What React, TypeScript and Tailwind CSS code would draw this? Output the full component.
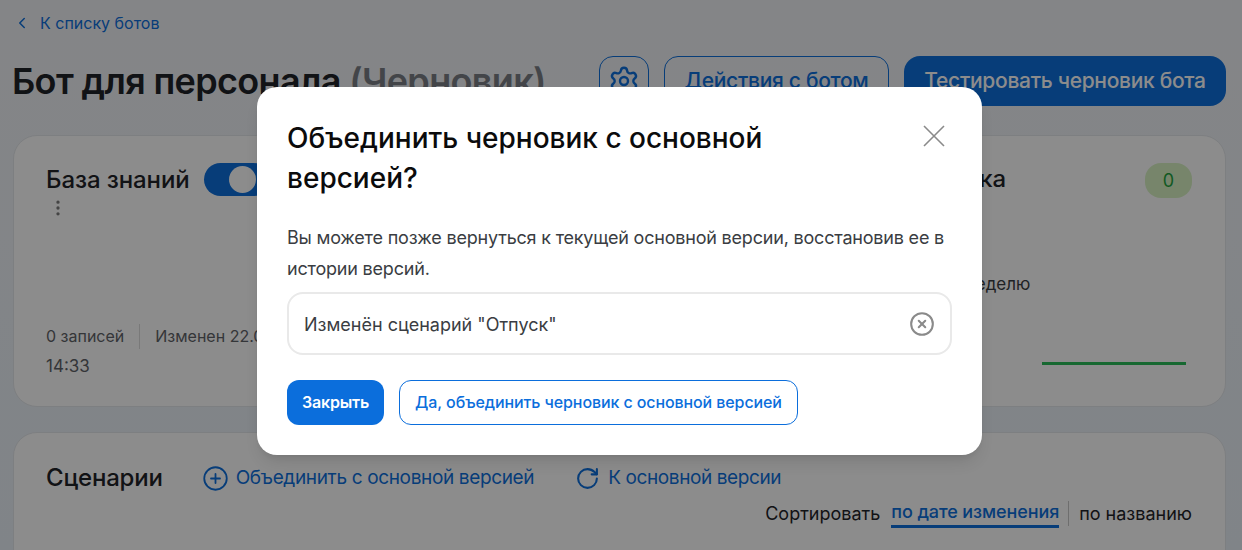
import React from 'react';
import { ChevronLeft, Settings, CircleX, CirclePlus, RotateCw, EllipsisVertical } from 'lucide-react';

function KnowledgeCard() {
  return (
    <div className="flex-1 min-w-0 pl-[32px] pt-[27px] pb-[24px] flex flex-col justify-between">
      <div>
        <div className="flex items-center gap-[14px]">
          <span className="text-[24px] leading-[32px] font-medium tracking-[-0.1px] text-[#1f2328]">База знаний</span>
          <div className="w-[66px] h-[33px] rounded-full bg-[#0d6fdd] flex items-center justify-end pr-[14px]">
            <div className="w-[27px] h-[27px] rounded-full bg-white" />
          </div>
        </div>
        <EllipsisVertical className="ml-[2px] mt-[2px] text-[#7d7d7d]" size={20} strokeWidth={2} />
      </div>
      <div className="text-[16px] leading-[32px] text-[#5f6368]">
        <div className="flex items-center">
          <span>0 записей</span>
          <span className="mx-[15px] w-px h-[25px] bg-[#dcdcdc]" />
          <span>Изменен 22.02.2024</span>
        </div>
        <div className="-mt-[2px] text-[17px]">14:33</div>
      </div>
    </div>
  );
}

function StatsCard() {
  return (
    <div className="w-[290px] pr-[33px] pt-[27px] pb-[41px] flex flex-col items-end relative">
      <div className="w-full flex items-start justify-between pl-[12px]">
        <span className="text-[24px] leading-[32px] font-medium tracking-[-0.1px] text-[#1f2328] -ml-[76px]">Статистика</span>
        <span className="w-[47px] h-[35px] rounded-[16px] bg-[#d9f3c4] text-[#1fa33f] text-[18px] flex items-center justify-center">0</span>
      </div>
      <div className="w-full pl-[8px] mt-[74px] text-[17px] leading-[24px] text-[#3a3d42] text-left">за неделю</div>
      <div className="mt-auto mr-[6px] w-[144px] h-[3px] bg-[#2bbd5a]" />
    </div>
  );
}

function Dialog() {
  return (
    <div className="absolute inset-0 z-10 bg-black/45">
      <div className="ml-[257px] mt-[87px] w-[725px] h-[368px] bg-white rounded-[20px] pl-[30px] pr-[30px] pt-[31px] shadow-lg">
        <div className="flex justify-between items-start">
          <h2 className="w-[520px] text-[28px] leading-[40px] font-medium text-[#0b0b0c]">Объединить черновик с основной версией?</h2>
          <button className="mr-[7px] mt-[7px] text-[#8a8a8a]">
            <svg width="22" height="22" viewBox="0 0 22 22" fill="none" stroke="currentColor" strokeWidth="1.6">
              <path d="M1 1L21 21M21 1L1 21" />
            </svg>
          </button>
        </div>
        <p className="mt-[24px] text-[18px] leading-[31px] tracking-[-0.2px] text-[#3a3d42]">Вы можете позже вернуться к текущей основной версии, восстановив ее в истории версий.</p>
        <div className="mt-[8px] h-[63px] rounded-[16px] border-2 border-[#e9e9e9] flex items-center justify-between pl-[15px] pr-[15px]">
          <span className="text-[18px] leading-[28px] mt-[3px] text-[#3a3d42]">Изменён сценарий "Отпуск"</span>
          <CircleX className="text-[#8a8a8a]" size={26} strokeWidth={1.9} />
        </div>
        <div className="mt-[25px] flex gap-[15px]">
          <button className="h-[45px] w-[97px] rounded-[12px] bg-[#0b6edc] text-white text-[16px] font-semibold tracking-[-0.2px] pb-[2px]">Закрыть</button>
          <button className="h-[45px] w-[399px] rounded-[12px] border border-[#0b6edc] text-[#0b6edc] text-[16px] font-medium tracking-[-0.1px] pb-[2px]">Да, объединить черновик с основной версией</button>
        </div>
      </div>
    </div>
  );
}

export default function App() {
  return (
    <div className="relative h-[550px] w-[1242px] overflow-hidden bg-gradient-to-b from-[#f1f3f6] to-[#eaf1f8] font-['Inter','Noto_Sans',sans-serif]">
      <div className="pl-[13px] pr-[16px]">
        <div className="h-[56px] flex items-center text-[#0d6fdd] text-[16px] -mt-[5px]">
          <ChevronLeft size={18} strokeWidth={2} />
          <span className="ml-[9px]">К списку ботов</span>
        </div>
        <div className="flex items-center h-[50px] mt-[5px]">
          <h1 className="text-[36px] font-semibold tracking-[-0.65px] -ml-[1px] text-[#1f2328] whitespace-nowrap">Бот для персонала <span className="text-[#7b7f85]">(Черновик)</span></h1>
          <div className="ml-auto flex">
            <button className="w-[50px] h-[50px] rounded-[14px] border border-[#0d6fdd] text-[#0d6fdd] flex items-center justify-center"><Settings size={32} strokeWidth={1.8} /></button>
            <button className="ml-[15px] w-[225px] h-[50px] rounded-[14px] border border-[#0d6fdd] text-[#0d6fdd] text-[21px] font-medium tracking-[-0.3px] whitespace-nowrap">Действия с ботом</button>
            <button className="ml-[15px] w-[322px] h-[50px] rounded-[16px] bg-[#0d6fdd] text-white text-[21px] font-medium tracking-[-0.3px]">Тестировать черновик бота</button>
          </div>
        </div>
        <div className="mt-[29px] h-[272px] rounded-[24px] bg-white border border-[#e4e7eb] flex">
          <KnowledgeCard />
          <StatsCard />
        </div>
        <div className="mt-[25px] h-[200px] rounded-[24px] bg-white border border-[#e4e7eb] pl-[32px] pr-[33px] pt-[29px]">
          <div className="flex items-center h-[32px]">
            <span className="text-[24px] font-medium tracking-[-0.2px] text-[#1f2328]">Сценарии</span>
            <button className="ml-[39px] flex items-center gap-[7px] text-[#0d6fdd] text-[19px] tracking-[-0.35px]"><CirclePlus size={27} strokeWidth={1.6} />Объединить с основной версией</button>
            <button className="ml-[41px] flex items-center gap-[8px] text-[#0d6fdd] text-[19px] tracking-[-0.4px]"><RotateCw size={25} strokeWidth={2} />К основной версии</button>
          </div>
          <div className="flex items-center justify-end mt-[5px] text-[18px] text-[#1f2328]">
            <span>Сортировать</span>
            <span className="ml-[11px] text-[#0d6fdd] font-medium tracking-[-0.1px] border-b-[3px] border-[#0d6fdd] leading-[26px]">по дате изменения</span>
            <span className="ml-[9px] mr-[10px] w-px h-[25px] bg-[#c9c9c9]" />
            <span>по названию</span>
          </div>
        </div>
      </div>
      <Dialog />
    </div>
  );
}
